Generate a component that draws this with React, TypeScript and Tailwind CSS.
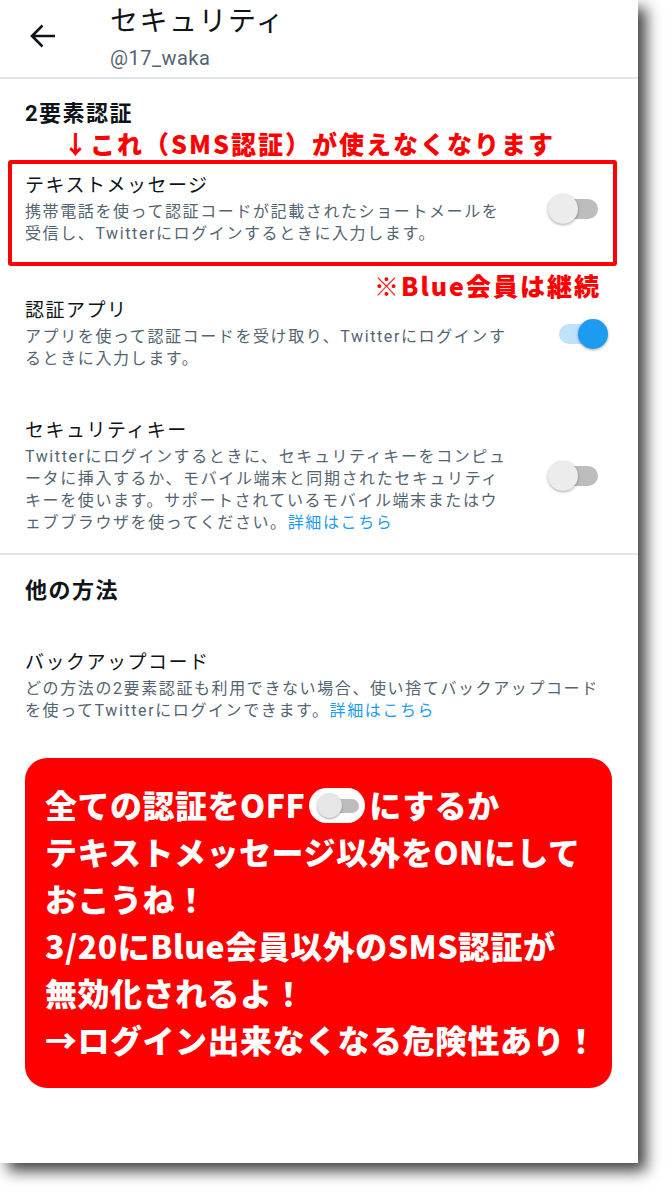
import { FC, ReactNode } from "react";

const ui = "font-['Roboto','Noto_Sans_CJK_JP',sans-serif]";
const heavy = "font-['Noto_Sans_CJK_JP',sans-serif] font-black";

interface SwitchProps {
  on?: boolean;
}
const Switch: FC<SwitchProps> = ({ on = false }) => {
  return (
    <div
      className={`relative shrink-0 w-[39px] h-[20px] rounded-full ${
        on ? "bg-[#bfe2fb]" : "bg-[#bdbdbd]"
      }`}
    >
      <span
        className={`absolute top-[-5px] w-[30px] h-[30px] rounded-full shadow-[0_1px_3px_rgba(0,0,0,0.35)] ${
          on ? "right-[-10px] bg-[#1d9bf0]" : "left-[-11px] bg-[#ececec]"
        }`}
      />
    </div>
  );
};

interface RowProps {
  title: string;
  lines: ReactNode[];
  on?: boolean;
  toggle?: boolean;
}
const Row: FC<RowProps> = ({ title, lines, on, toggle = true }) => {
  return (
    <div className="flex items-center justify-between">
      <div className="flex-1">
        <p className="text-[19px] leading-[26px] tracking-[1.5px] text-[#0f1419]">
          {title}
        </p>
        <p className="mt-[2px] text-[16px] leading-[22px] tracking-[1.6px] text-[#536471] whitespace-nowrap">
          {lines.map((line, i) => (
            <span key={i} className="block">
              {line}
            </span>
          ))}
        </p>
      </div>
      {toggle && <Switch on={on} />}
    </div>
  );
};

const More = () => <span className="text-[#1d9bf0]">詳細はこちら</span>;

// small switch drawn inside the warning text
const InlineSwitch = () => (
  <span className="relative inline-block align-[-5px] w-[56px] h-[35px] mx-[4px] rounded-full bg-white">
    <span className="absolute left-[24px] top-[11px] w-[26px] h-[14px] rounded-full bg-[#bdbdbd]" />
    <span className="absolute left-[8px] top-[5px] w-[25px] h-[25px] rounded-full bg-[#e6e6e6] shadow-[0_1px_2px_rgba(0,0,0,0.35)]" />
  </span>
);

export default function App() {
  return (
    <div className={`min-h-[1200px] bg-white ${ui}`}>
      <div className="w-[638px] h-[1163px] bg-white shadow-[8px_8px_14px_rgba(0,0,0,0.75)]">
        {/* header */}
        <header className="h-[79px] flex border-b-2 border-[#e1e5e9]">
          <div className="w-[110px] pl-[30px] pt-[24px]">
            <svg width="26" height="24" viewBox="0 0 26 24" fill="none">
              <path
                d="M25 12H2.5M12.5 1.5L2 12l10.5 10.5"
                stroke="#0f1419"
                strokeWidth="2.6"
              />
            </svg>
          </div>
          <div className="pt-[5px]">
            <h1 className="text-[28px] leading-[33px] tracking-[1.5px] text-[#0f1419]">
              セキュリティ
            </h1>
            <p className="mt-[8px] text-[20px] leading-[24px] tracking-[0.5px] text-[#536471]">
              @17_waka
            </p>
          </div>
        </header>

        {/* 2FA methods */}
        <section className="pt-[21px]">
          <h2 className="pl-[25px] text-[22px] leading-[28px] tracking-[1.5px] font-bold text-[#0f1419]">
            2要素認証
          </h2>
          <p
            className={`pl-[63px] text-[25px] leading-[30px] tracking-[2px] text-[#ff0000] ${heavy}`}
          >
            ↓これ（SMS認証）が使えなくなります
          </p>

          <div className="mt-[2px] ml-[8px] w-[609px] h-[106px] border-4 border-[#ff0000] rounded-[3px] pl-[13px] pr-[15px] pt-[9px]">
            <Row
              title="テキストメッセージ"
              lines={[
                "携帯電話を使って認証コードが記載されたショートメールを",
                "受信し、Twitterにログインするときに入力します。",
              ]}
            />
          </div>

          <p
            className={`mt-[6px] pr-[37px] text-right text-[25px] leading-[26px] tracking-[2px] text-[#ff0000] ${heavy}`}
          >
            ※Blue会員は継続
          </p>

          <div className="pl-[25px] pr-[40px]">
            <Row
              title="認証アプリ"
              on
              lines={[
                "アプリを使って認証コードを受け取り、Twitterにログインす",
                "るときに入力します。",
              ]}
            />
            <div className="mt-[48px]">
              <Row
                title="セキュリティキー"
                lines={[
                  "Twitterにログインするときに、セキュリティキーをコンピュ",
                  "ータに挿入するか、モバイル端末と同期されたセキュリティ",
                  "キーを使います。サポートされているモバイル端末またはウ",
                  <>
                    ェブブラウザを使ってください。<More />
                  </>,
                ]}
              />
            </div>
          </div>
        </section>

        <div className="mt-[19px] h-[2px] bg-[#e1e5e9]" />

        {/* other methods */}
        <section className="pt-[22px] pl-[25px] pr-[40px]">
          <h2 className="text-[22px] leading-[28px] tracking-[1.5px] font-bold text-[#0f1419]">
            他の方法
          </h2>
          <div className="mt-[45px]">
            <Row
              title="バックアップコード"
              toggle={false}
              lines={[
                "どの方法の2要素認証も利用できない場合、使い捨てバックアップコード",
                <>
                  を使ってTwitterにログインできます。<More />
                </>,
              ]}
            />
          </div>
        </section>

        {/* warning */}
        <div
          className={`mt-[36px] ml-[25px] w-[587px] h-[330px] rounded-[22px] bg-[#ff0000] pl-[20px] pt-[23px] text-white text-[32px] leading-[47px] tracking-[0.5px] whitespace-nowrap ${heavy}`}
        >
          <p>
            全ての認証をOFF
            <InlineSwitch />
            にするか
          </p>
          <p>テキストメッセージ以外をONにして</p>
          <p>おこうね！</p>
          <p>3/20にBlue会員以外のSMS認証が</p>
          <p>無効化されるよ！</p>
          <p>→ログイン出来なくなる危険性あり！</p>
        </div>
      </div>
    </div>
  );
}
